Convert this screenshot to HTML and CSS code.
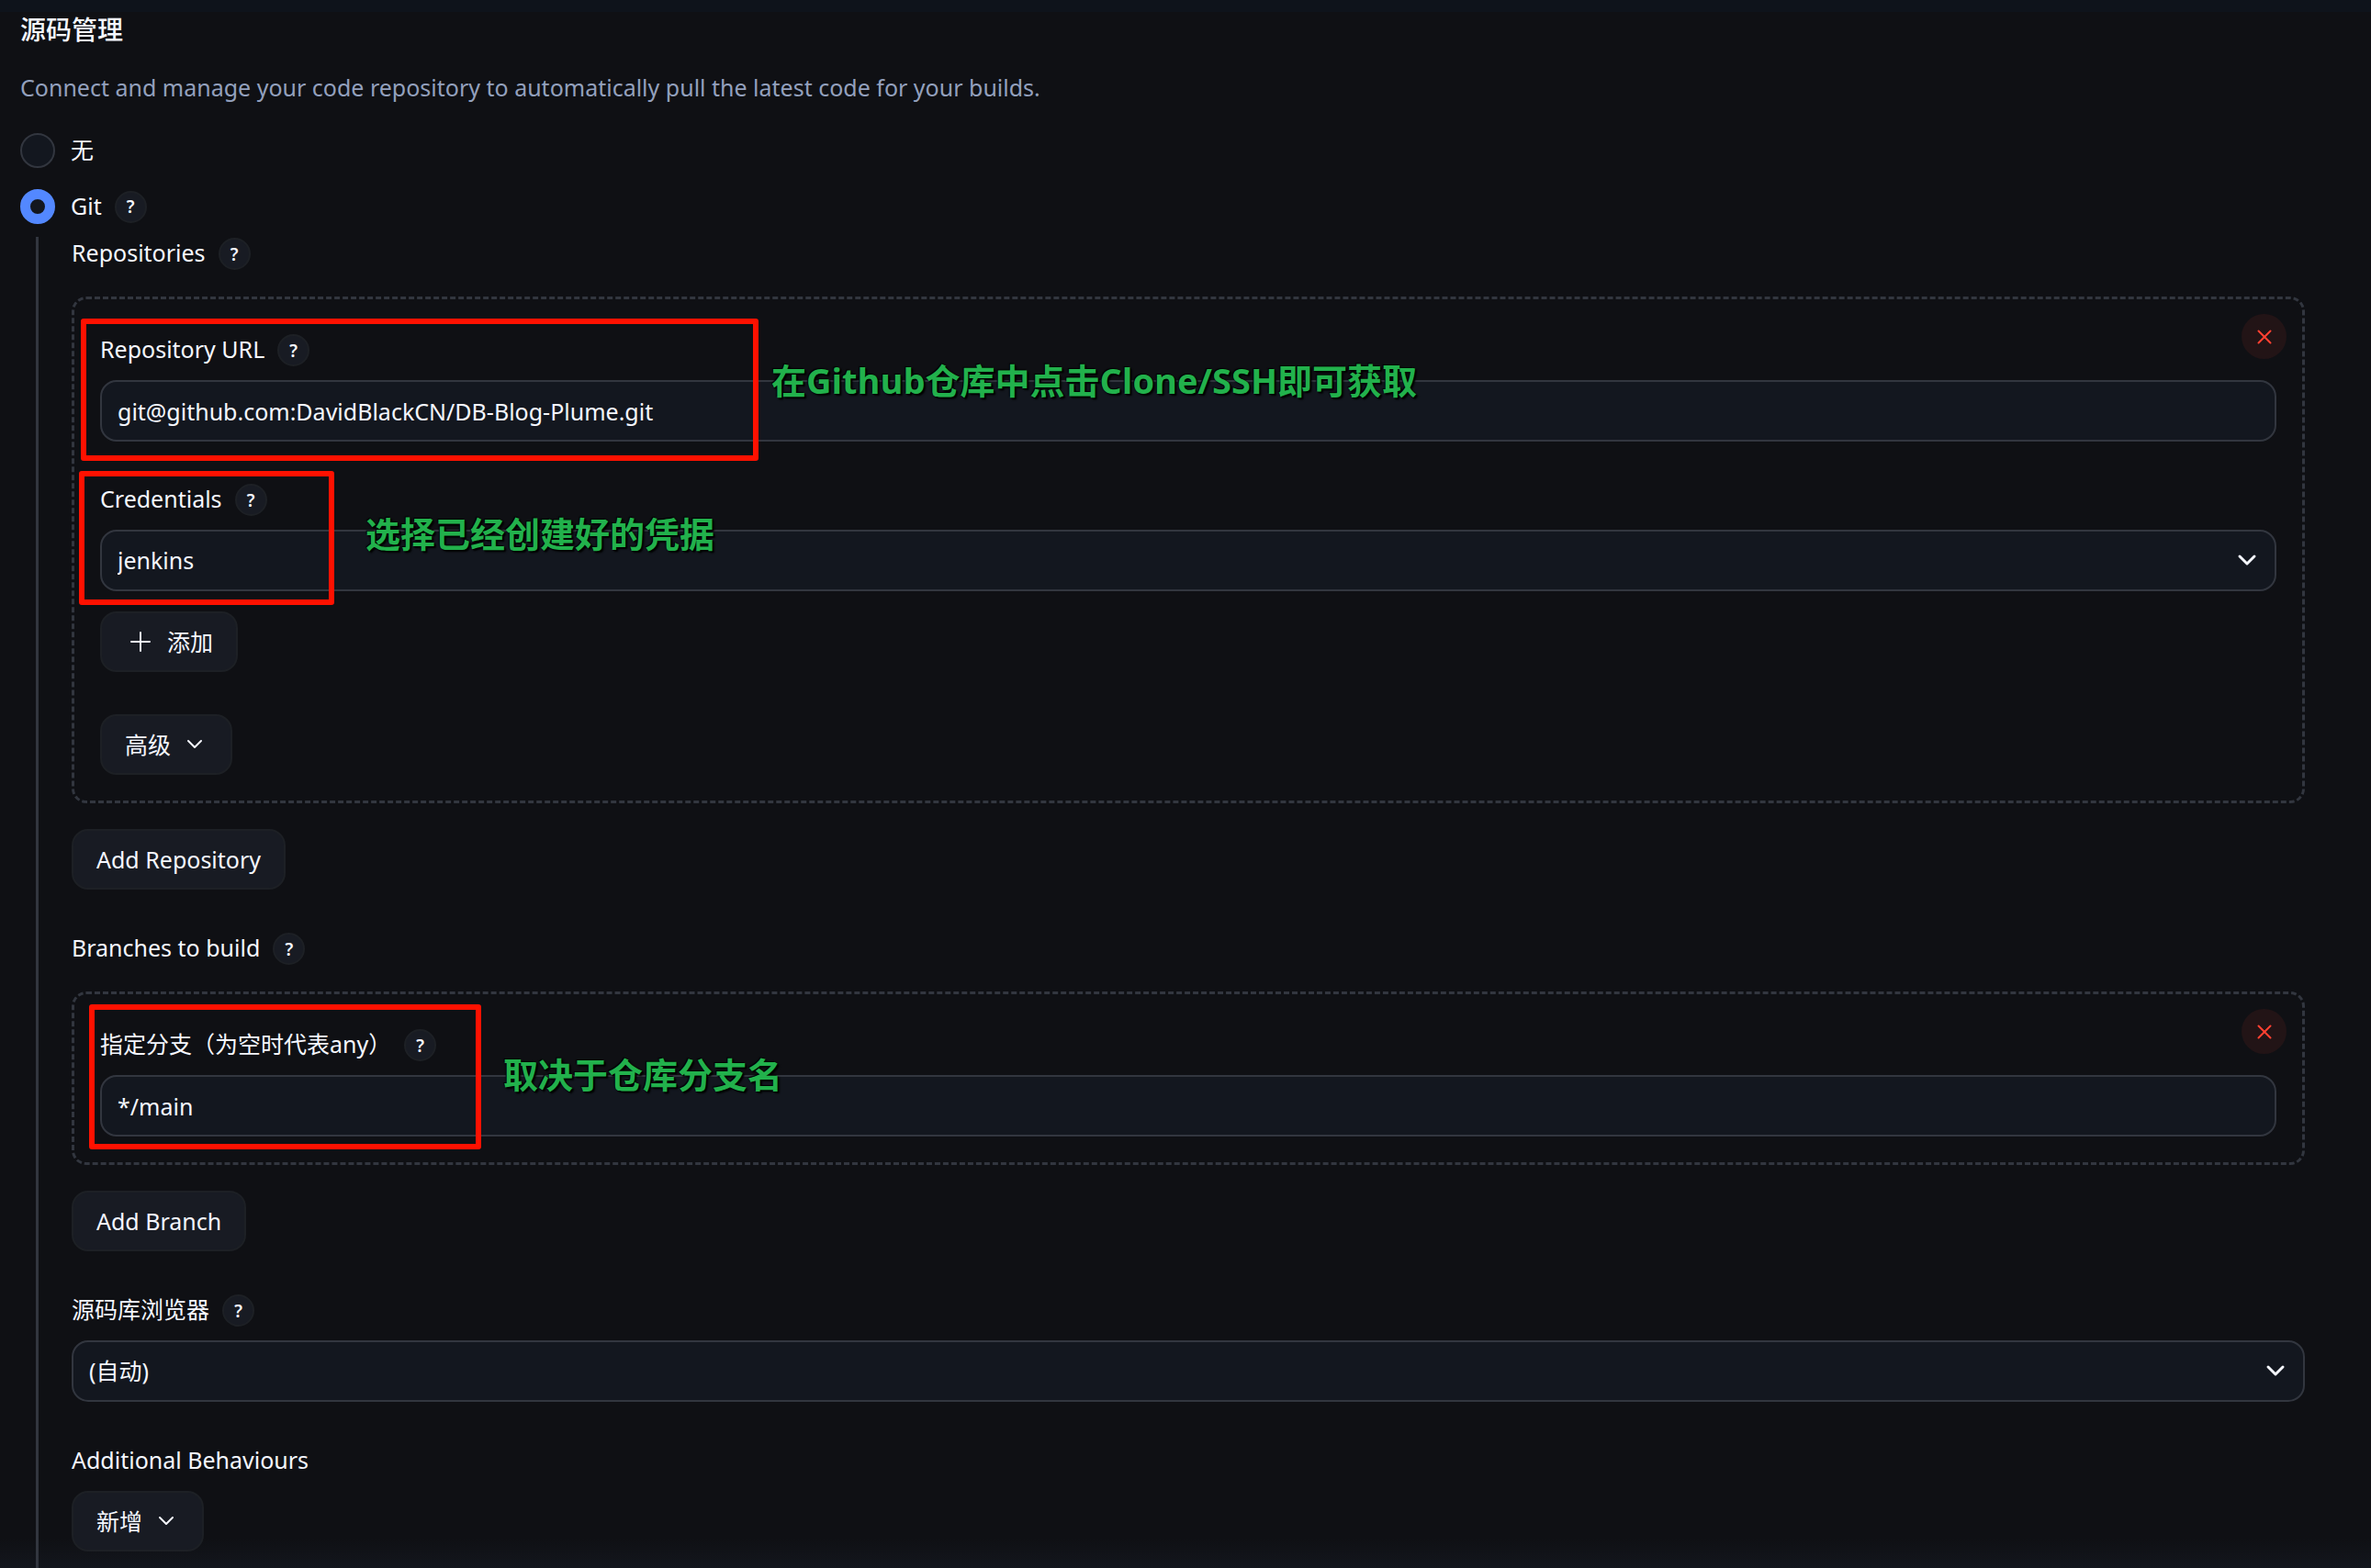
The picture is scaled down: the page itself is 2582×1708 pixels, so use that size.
FILE: index.html
```html
<!DOCTYPE html>
<html lang="zh-CN">
<head>
    <meta charset="UTF-8">
    <meta name="viewport" content="width=device-width, initial-scale=1.0">
    <title>源码管理</title>
    <link rel="stylesheet" href="styles.css">
</head>
<body>
    <form class="scm">
        <h2 class="scm-title">源码管理</h2>
        <p class="scm-description">Connect and manage your code repository to automatically pull the latest code for your builds.</p>

        <!-- None -->
        <div class="radio-row">
            <input type="radio" id="scm-none" name="scm">
            <label for="scm-none">无</label>
        </div>

        <!-- Git -->
        <div class="radio-row">
            <input type="radio" id="scm-git" name="scm" checked>
            <label for="scm-git">Git</label>
            <button type="button" class="help" aria-label="Help: Git">?</button>
        </div>

        <div class="scm-body">
            <!-- Repositories -->
            <div class="form-group">
                <div class="label-row">
                    <span>Repositories</span>
                    <button type="button" class="help" aria-label="Help: Repositories">?</button>
                </div>
                <div class="repeat-box">
                    <button type="button" class="remove" aria-label="Delete repository">
                        <svg width="16" height="16" viewBox="0 0 16 16"><path d="M1.5 1.5l13 13M14.5 1.5l-13 13"/></svg>
                    </button>

                    <div class="field">
                        <div class="label-row">
                            <label for="url">Repository URL</label>
                            <button type="button" class="help" aria-label="Help: Repository URL">?</button>
                        </div>
                        <input type="text" id="url" class="control" value="git@github.com:DavidBlackCN/DB-Blog-Plume.git">
                        <div class="mark mark-url"></div>
                        <div class="note note-url">在Github仓库中点击Clone/SSH即可获取</div>
                    </div>

                    <div class="field">
                        <div class="label-row">
                            <label for="credentials">Credentials</label>
                            <button type="button" class="help" aria-label="Help: Credentials">?</button>
                        </div>
                        <div class="select">
                            <select id="credentials" class="control">
                                <option>jenkins</option>
                            </select>
                            <svg width="22" height="14" viewBox="0 0 22 14"><path d="M3 3l8 8 8-8"/></svg>
                        </div>
                        <button type="button" class="btn btn-add">
                            <svg width="34" height="34" viewBox="0 0 34 34"><path d="M17 7v20M7 17h20"/></svg>
                            添加
                        </button>
                        <div class="mark mark-credentials"></div>
                        <div class="note note-credentials">选择已经创建好的凭据</div>
                    </div>

                    <button type="button" class="btn">
                        高级
                        <svg width="28" height="28" viewBox="0 0 28 28"><path d="M7 10l7 7 7-7"/></svg>
                    </button>
                </div>
                <button type="button" class="btn">Add Repository</button>
            </div>

            <!-- Branches -->
            <div class="form-group">
                <div class="label-row">
                    <span>Branches to build</span>
                    <button type="button" class="help" aria-label="Help: Branches to build">?</button>
                </div>
                <div class="repeat-box">
                    <button type="button" class="remove" aria-label="Delete branch">
                        <svg width="16" height="16" viewBox="0 0 16 16"><path d="M1.5 1.5l13 13M14.5 1.5l-13 13"/></svg>
                    </button>
                    <div class="field">
                        <div class="label-row">
                            <label for="branch">指定分支（为空时代表any）</label>
                            <button type="button" class="help" aria-label="Help: branch">?</button>
                        </div>
                        <input type="text" id="branch" class="control" value="*/main">
                        <div class="mark mark-branch"></div>
                        <div class="note note-branch">取决于仓库分支名</div>
                    </div>
                </div>
                <button type="button" class="btn">Add Branch</button>
            </div>

            <!-- Repository browser -->
            <div class="form-group">
                <div class="label-row label-row-tight">
                    <label for="browser">源码库浏览器</label>
                    <button type="button" class="help" aria-label="Help: browser">?</button>
                </div>
                <div class="select">
                    <select id="browser" class="control">
                        <option>(自动)</option>
                    </select>
                    <svg width="22" height="14" viewBox="0 0 22 14"><path d="M3 3l8 8 8-8"/></svg>
                </div>
            </div>

            <!-- Additional behaviours -->
            <div class="form-group">
                <div class="label-row label-row-tight">
                    <span>Additional Behaviours</span>
                </div>
                <button type="button" class="btn">
                    新增
                    <svg width="28" height="28" viewBox="0 0 28 28"><path d="M7 10l7 7 7-7"/></svg>
                </button>
            </div>
        </div>
    </form>
</body>
</html>
```
FILE: styles.css
```css
* {
    box-sizing: border-box;
}

body {
    margin: 0;
    background: #0f1014;
    color: #f5f7ff;
    font-family: "Noto Sans", "Noto Sans CJK SC", sans-serif;
    font-size: 25px;
    line-height: 35px;
}

input, select, button {
    font: inherit;
    color: inherit;
}

svg {
    fill: none;
    stroke: currentColor;
    stroke-width: 2;
    stroke-linecap: round;
    stroke-linejoin: round;
}

.scm {
    display: flex;
    flex-direction: column;
    min-height: 100vh;
    padding: 13px 72px 0 22px;
    /* edges of the sticky bars above and below */
    background: linear-gradient(#0e131b 13px, transparent 13px), linear-gradient(to top, #13161d, transparent 32px);
}

.scm-title {
    margin: 0 0 27px;
    font-size: 28px;
    font-weight: 500;
    line-height: 38px;
}

.scm-description {
    margin: 0 0 32px;
    color: #93a0bd;
}

/* Radio buttons */
.radio-row {
    display: flex;
    align-items: center;
    height: 38px;
    margin-bottom: 23px;
}

.radio-row + .radio-row {
    margin-bottom: 14px;
}

.radio-row input {
    appearance: none;
    width: 38px;
    height: 38px;
    margin: 0 17px 0 0;
    border: 2px solid #32363f;
    border-radius: 50%;
    background: #13171f;
}

.radio-row input:checked {
    border: 11px solid #5388ff;
}

.radio-row label,
.label-row label,
.label-row span {
    padding-bottom: 2px;
}

.help {
    width: 35px;
    height: 35px;
    margin-left: 14px;
    padding: 0;
    border: 2px solid #1d2025;
    border-radius: 50%;
    background: #181b23;
    font-size: 19px;
    font-weight: 600;
    line-height: 30px;
}

/* Settings of the selected option, joined by the line on the left */
.scm-body {
    flex: 1;
    margin-left: 17px;
    padding: 1px 0 16px 36px;
    border-left: 3px solid #32363f;
}

.form-group {
    margin-bottom: 47px;
}

.form-group:last-child {
    margin-bottom: 0;
}

.label-row {
    display: flex;
    align-items: center;
    height: 35px;
    margin-bottom: 29px;
}

.field .label-row,
.label-row-tight {
    margin-bottom: 15px;
}

.repeat-box {
    position: relative;
    margin-bottom: 28px;
    padding: 38px 28px 28px;
    border: 3px dashed #32363f;
    border-radius: 16px;
}

.remove {
    position: absolute;
    top: 16px;
    right: 17px;
    display: flex;
    align-items: center;
    justify-content: center;
    width: 49px;
    height: 49px;
    padding: 0;
    border: none;
    border-radius: 50%;
    background: #221416;
    color: #ff4131;
}

.field {
    position: relative;
}

.field:not(:last-child) {
    margin-bottom: 46px;
}

.control {
    display: block;
    width: 100%;
    height: 67px;
    padding: 0 17px;
    border: 2px solid #32363f;
    border-radius: 18px;
    background: #13171f;
    appearance: none;
}

.select {
    position: relative;
}

.select svg {
    position: absolute;
    top: 26px;
    right: 21px;
    stroke-width: 3;
    pointer-events: none;
}

.btn {
    display: flex;
    align-items: center;
    gap: 12px;
    height: 66px;
    padding: 0 25px;
    border: 2px solid #1d2025;
    border-radius: 18px;
    background: #181b23;
}

.btn-add {
    margin-top: 22px;
}

/* Tutorial marks drawn over the form */
.mark {
    position: absolute;
    border: 6px solid #ff1100;
    border-radius: 3px;
    pointer-events: none;
}

.mark-url {
    top: -17px;
    left: -21px;
    width: 738px;
    height: 155px;
}

.mark-credentials {
    top: -14px;
    left: -23px;
    width: 278px;
    height: 146px;
}

.mark-branch {
    top: -27px;
    left: -12px;
    width: 427px;
    height: 158px;
}

.note {
    position: absolute;
    color: #22b14c;
    font-family: "Open Sans", "Noto Sans CJK SC", sans-serif;
    font-size: 38px;
    font-weight: 700;
    line-height: 50px;
    white-space: nowrap;
    text-shadow: 1px 1px 1px #000, 2px 2px 2px #000, -1px -1px 1px #000;
    pointer-events: none;
}

.note-url {
    top: 25px;
    left: 731px;
}

.note-credentials {
    top: 29px;
    left: 289px;
}

.note-branch {
    top: 24px;
    left: 439px;
}
```
